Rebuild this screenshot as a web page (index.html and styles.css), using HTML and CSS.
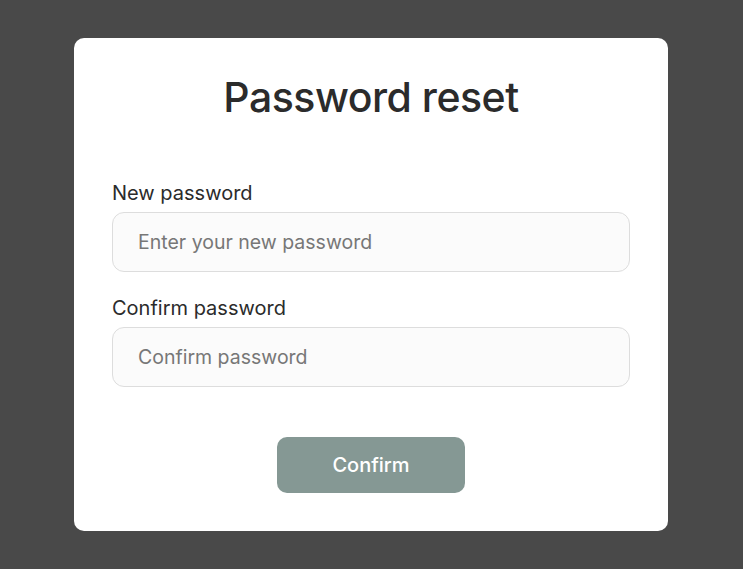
FILE: index.html
```html
<!doctype html>
<html>
<head>
    <meta charset="UTF-8">
    <title>Password reset</title>
    <link rel="stylesheet" href="styles.css">
</head>
<body>
<div class="m-reset">
    <h1 class="hd">Password reset</h1>
    <form class="bd">
        <label class="field">
            <span class="label">New password</span>
            <input type="password" placeholder="Enter your new password"/>
        </label>
        <label class="field">
            <span class="label">Confirm password</span>
            <input type="password" placeholder="Confirm password"/>
        </label>
        <p class="ft"><button type="button">Confirm</button></p>
    </form>
</div>
</body>
</html>
```

FILE: styles.css
```css
html, body, h1, p, form { margin: 0; padding: 0; }
body { background-color: #494949; font-family: Inter, 'Noto Sans', sans-serif; color: #2b2b2b; padding: 38px 1px 0 0; }
.m-reset { width: 518px; margin: 0 auto; padding: 33px 38px 38px; background-color: #fff; border-radius: 10px; }
.m-reset .hd { font-size: 41px; line-height: 53px; font-weight: 500; text-align: center; letter-spacing: -0.5px; margin-bottom: 57px; }
.m-reset .field { display: flex; flex-direction: column; gap: 7px; margin-bottom: 24px; }
.m-reset .label { font-size: 20px; line-height: 24px; }
.m-reset input { box-sizing: border-box; height: 60px; padding: 0 25px; border: 1px solid #ddd; border-radius: 12px; background-color: #fbfbfb; font: 19.5px Inter, 'Noto Sans', sans-serif; color: #2b2b2b; outline: none; }
.m-reset input::placeholder { color: #777; }
.m-reset .ft { display: flex; justify-content: center; padding-top: 26px; }
.m-reset button { width: 188px; height: 56px; border: 0; border-radius: 10px; background-color: #859894; color: #fff; font: 500 20px Inter, 'Noto Sans', sans-serif; }
```
